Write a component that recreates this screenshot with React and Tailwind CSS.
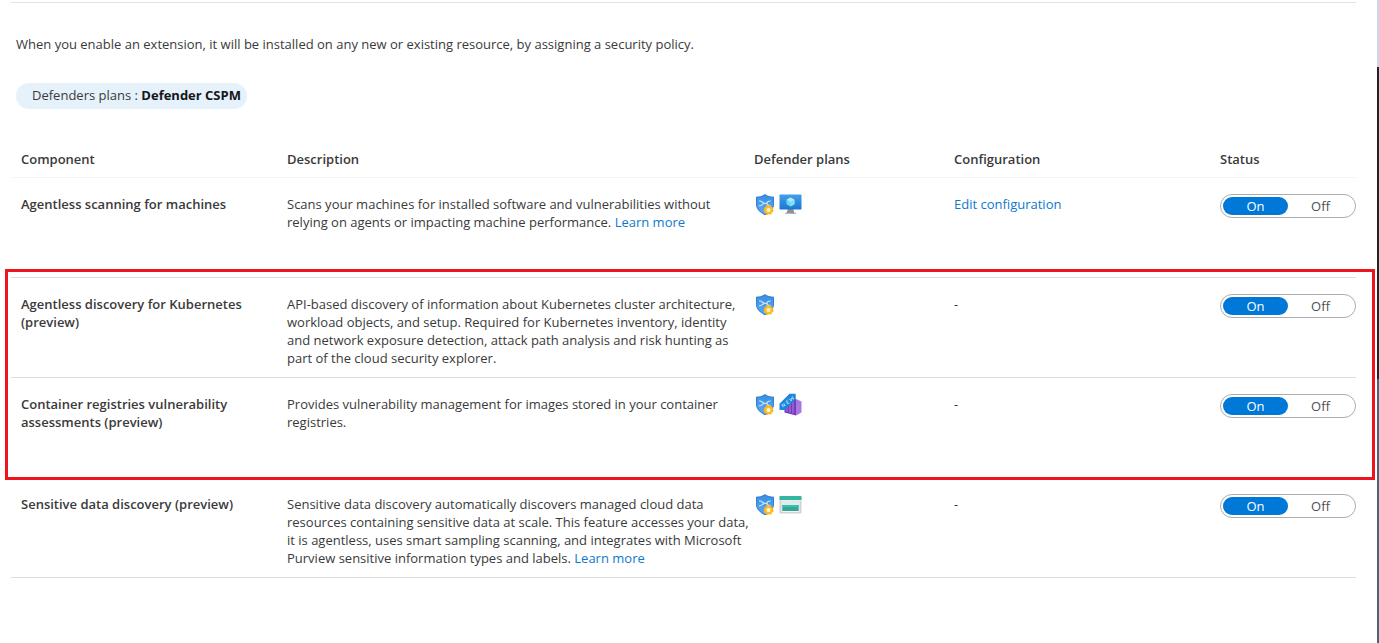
import { useState } from "react";

function ShieldIcon() {
  return (
    <svg width="20" height="24" viewBox="0 0 20 24" role="img" aria-label="Defender CSPM">
      <defs>
        <linearGradient id="shieldFill" x1="0" y1="0" x2="0" y2="1">
          <stop offset="0" stopColor="#3b8fe3" />
          <stop offset="1" stopColor="#5ba8ef" />
        </linearGradient>
      </defs>
      <path d="M10 1C7.700 2.900 5 3.600 1 3.700V11.500c0 5.200 4.800 8.500 9 10.800 4.200-2.300 9-5.600 9-10.800V3.700c-4-.1-6.700-.8-9-2.700z" fill="#2f80d4" />
      <path d="M10 2.200C7.800 3.900 5.200 4.500 1.900 4.600v6.900c0 4.600 4.300 7.600 8.100 9.700 3.800-2.100 8.100-5.100 8.100-9.700V4.600C14.800 4.500 12.200 3.900 10 2.200z" fill="url(#shieldFill)" />
      <path d="M4.500 7.800c2.800 0 3.200 2.500 5.200 2.500h1.500M4.500 12.800c2.800 0 3.200-2.500 5.200-2.500M15.300 8c-2 0-3.300.9-3.300 2.300s1.300 2.300 3.300 2.300" fill="none" stroke="#c4e3ff" strokeWidth="1.200" strokeLinecap="round" />
      <circle cx="13.500" cy="17" r="4.300" fill="#ffbe26" />
      <circle cx="13.500" cy="17" r="4.300" fill="none" stroke="#fbb21a" strokeWidth="1.400" strokeDasharray="2 1.377" />
      <circle cx="13.500" cy="17" r="2" fill="#fff6d6" />
    </svg>
  );
}

function MachineIcon() {
  return (
    <svg width="23" height="24" viewBox="0 0 23 24" role="img" aria-label="Servers">
      <defs>
        <linearGradient id="screenFill" x1="0" y1="0" x2="0" y2="1">
          <stop offset="0" stopColor="#459fe9" />
          <stop offset="1" stopColor="#1a76d2" />
        </linearGradient>
      </defs>
      <path d="M8.700 16h5.600l.7 3c.2.600 1.200.800 1.800 1.100V21H6.200v-.9c.6-.3 1.600-.5 1.800-1.100z" fill="#8d9297" />
      <path d="M6.200 20h10.600v1H6.200z" fill="#b4b8bc" />
      <rect x=".5" y="1.500" width="22" height="15" rx=".8" fill="url(#screenFill)" />
      <path d="M11.500 4.500l4 2.200v4.600l-4 2.200-4-2.200V6.700z" fill="#6fd4f2" />
      <path d="M11.500 4.500l4 2.200-4 2.300-4-2.300z" fill="#aeeafa" />
      <path d="M11.500 9l4-2.300v4.600l-4 2.200z" fill="#86def6" />
    </svg>
  );
}

function ContainerIcon() {
  return (
    <svg width="23" height="24" viewBox="0 0 23 24" role="img" aria-label="Containers">
      <path d="M5.500 8.500L17 6v16.500L5.500 19.500z" fill="#7a3bbb" />
      <path d="M17 6l5.500 2.600v10.800L17 22.500z" fill="#a877df" />
      <path d="M8 10v8.500M11 9.500v10M14 9v11.300" stroke="#a46fdc" strokeWidth="1.300" />
      <path d="M10.500.8h6.200v5.700L5.800 17H.500v-6.300z" fill="#1c86dc" />
      <path d="M4.300 14.300L2.800 11.600l3.400 1.200-1.500-2.700M8.800 11.100L7.100 8.300l1.800-1.500M7.900 9.700l1.500-1.200M8.800 11.100l1.800-1.400M10.100 5.800l2.300 2.300-.4-3 2.700 1-1.600-3" fill="none" stroke="#c5e4fb" strokeWidth=".8" />
    </svg>
  );
}

function StorageIcon() {
  return (
    <svg width="23" height="24" viewBox="0 0 23 24" role="img" aria-label="Storage">
      <rect x=".5" y="3" width="22" height="17.500" rx="1" fill="#d0d2d5" />
      <path d="M.5 4c0-.6.400-1 1-1h20c.6 0 1 .4 1 1v3H.5z" fill="#35b5a4" />
      <rect x=".5" y="7" width="22" height="1.200" fill="#e9ebec" />
      <rect x="2.500" y="8.500" width="18" height="10.500" rx=".6" fill="#f3f5f6" />
      <rect x="3.300" y="9.200" width="16.400" height="2.800" fill="#d4efec" />
      <rect x="3.300" y="12" width="16.400" height="6" fill="#34a695" />
      <rect x="3.300" y="12" width="16.400" height="2.200" fill="#3cbdad" />
    </svg>
  );
}

function Lines({ lines, link }) {
  return lines.map((line, i) => (
    <span key={line} className="block whitespace-nowrap">
      {line}
      {link && i === lines.length - 1 && (
        <>
          {" "}
          <a href="#learn-more" className="text-[#0f78cc]">Learn more</a>
        </>
      )}
    </span>
  ));
}

function StatusToggle({ name, label }) {
  const [value, setValue] = useState("On");
  return (
    <div role="radiogroup" aria-label={label} className="relative flex h-6 w-full rounded-full border border-[#acacac] p-0.5">
      {["On", "Off"].map((option) => (
        <label key={option} className="flex flex-1 cursor-pointer">
          <input
            type="radio"
            name={name}
            value={option}
            checked={value === option}
            onChange={() => setValue(option)}
            className="peer sr-only"
          />
          <span className="flex flex-1 items-center justify-center rounded-full text-[#505050] peer-checked:bg-[#0078d7] peer-checked:text-white">
            {option}
          </span>
        </label>
      ))}
    </div>
  );
}

function Row({ row, children }) {
  return (
    <tr className="h-[100px] border-b border-[#dcdcdc] align-top">
      <th scope="row" className="pt-[17px] pl-2.5 text-left font-semibold">
        <Lines lines={row.name} />
      </th>
      <td className="pt-[17px] pl-2.5">
        <Lines lines={row.description} link={row.link} />
      </td>
      <td className="pt-[15px] pl-[11px]">
        <div className="flex gap-1">
          <ShieldIcon />
          {row.icon}
        </div>
      </td>
      <td className="pt-[17px] pl-2.5">
        {row.editable ? <a href="#edit" className="text-[#0f78cc]">Edit configuration</a> : "-"}
      </td>
      <td className="pt-4 pl-2.5">
        <StatusToggle name={row.id} label={row.name.join(" ")} />
        {children}
      </td>
    </tr>
  );
}

const rows = [
  {
    id: "machines",
    name: ["Agentless scanning for machines"],
    description: [
      "Scans your machines for installed software and vulnerabilities without",
      "relying on agents or impacting machine performance.",
    ],
    link: true,
    icon: <MachineIcon />,
    editable: true,
  },
  {
    id: "kubernetes",
    name: ["Agentless discovery for Kubernetes", "(preview)"],
    description: [
      "API-based discovery of information about Kubernetes cluster architecture,",
      "workload objects, and setup. Required for Kubernetes inventory, identity",
      "and network exposure detection, attack path analysis and risk hunting as",
      "part of the cloud security explorer.",
    ],
  },
  {
    id: "registries",
    name: ["Container registries vulnerability", "assessments (preview)"],
    description: [
      "Provides vulnerability management for images stored in your container",
      "registries.",
    ],
    icon: <ContainerIcon />,
  },
  {
    id: "sensitive",
    name: ["Sensitive data discovery (preview)"],
    description: [
      "Sensitive data discovery automatically discovers managed cloud data",
      "resources containing sensitive data at scale. This feature accesses your data,",
      "it is agentless, uses smart sampling scanning, and integrates with Microsoft",
      "Purview sensitive information types and labels.",
    ],
    link: true,
    icon: <StorageIcon />,
  },
];

export default function App() {
  return (
    <div className="flex min-h-screen bg-white font-['Open_Sans',sans-serif] text-[13px] leading-[18px] text-[#3a3a3a]">
      <main className="min-w-0 flex-1 pt-0.5 pr-[21px] pl-[11px]">
        <div className="border-t border-[#e3e3e3] pt-8">
          <p className="pl-[5px]">
            When you enable an extension, it will be installed on any new or existing resource, by assigning a security policy.
          </p>
          <button type="button" className="mt-[30px] ml-[5px] flex h-[26px] items-center rounded-full bg-[#e5f1fb] pr-1.5 pb-0.5 pl-4">
            <span>Defenders plans :&nbsp;</span>
            <strong className="font-bold text-[#161616]">Defender CSPM</strong>
          </button>
        </div>
        <table className="mt-8 w-full table-fixed border-collapse">
          <colgroup>
            <col className="w-[266px]" />
            <col />
            <col className="w-[200px]" />
            <col className="w-[266px]" />
            <col className="w-[146px]" />
          </colgroup>
          <thead>
            <tr className="h-9 border-b border-[#f5f5f5] text-left">
              {["Component", "Description", "Defender plans", "Configuration", "Status"].map((h) => (
                <th key={h} scope="col" className="pl-2.5 font-semibold">{h}</th>
              ))}
            </tr>
          </thead>
          <tbody>
            <Row row={rows[0]} />
          </tbody>
          <tbody className="relative">
            <Row row={rows[1]} />
            <Row row={rows[2]}>
              <div className="pointer-events-none absolute -top-2 -right-[19px] -bottom-[3px] -left-1.5 border-3 border-[#ee131d]" />
            </Row>
          </tbody>
          <tbody>
            <Row row={rows[3]} />
          </tbody>
        </table>
      </main>
      <div className="flex w-0.5 flex-col" aria-hidden="true">
        <div className="h-[67px] bg-[#c7d7ee]" />
        <div className="h-[312px] bg-[#222222]" />
        <div className="flex-1 bg-[#4a6274]" />
      </div>
    </div>
  );
}
